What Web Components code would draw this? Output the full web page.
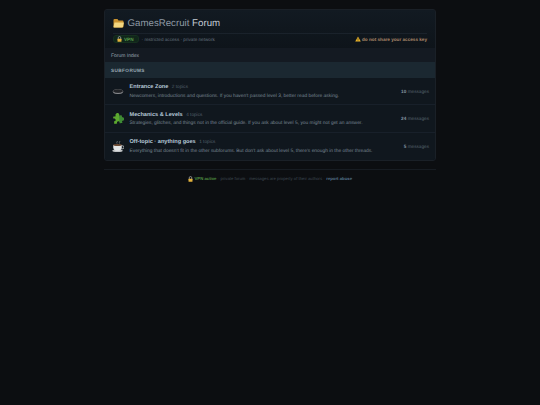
<!DOCTYPE html>
<html>
<head>
<meta charset="utf-8">
<title>GamesRecruit Forum</title>
<style>
  html, body { margin: 0; background: #0c0e11; }
  body { font-family: "Liberation Sans", Arial, sans-serif; color: #9aa7b2; text-rendering: geometricPrecision; }
  forum-page { width: 332px; margin: 9px auto 0; }
</style>
</head>
<body>
<forum-page>
  <forum-header></forum-header>
  <forum-crumb>Forum Index</forum-crumb>
  <forum-section>SUBFORUMS</forum-section>
  <forum-row name="Entrance Zone" topics="2 topics" count="10" icon="hole">Newcomers, introductions and questions. If you haven't passed level 3, better read before asking.</forum-row>
  <forum-row name="Mechanics &amp; Levels" topics="4 topics" count="24" icon="puzzle">Strategies, glitches, and things not in the official guide. If you ask about level 5, you might not get an answer.</forum-row>
  <forum-row name="Off-topic · anything goes" topics="1 topics" count="5" icon="coffee" last>Everything that doesn't fit in the other subforums. But don't ask about level 5, there's enough in the other threads.</forum-row>
  <forum-footer slot="footer"></forum-footer>
</forum-page>

<script>
const LOCK = `<svg width="5" height="6" viewBox="0 0 10 12"><path d="M2.500 6V3.600a2.500 2.500 0 0 1 5 0V6" fill="none" stroke="#aeb2b6" stroke-width="1.500"/><rect x="1" y="5.500" width="8" height="6" rx="1" fill="#e3b23c"/></svg>`;

const ICONS = {
  hole: `<svg width="12" height="12" viewBox="0 0 24 24"><ellipse cx="12" cy="13" rx="10.500" ry="5" fill="#6b6d70"/><ellipse cx="12" cy="12.300" rx="9.500" ry="3.700" fill="#212327"/><path d="M3 14.500c3 3 15 3 18 0" fill="none" stroke="#a4a6a9" stroke-width="1.200"/></svg>`,
  puzzle: `<svg width="12" height="12" viewBox="0 0 24 24"><path d="M2 9.500l5.500-1c-1.300-2.300-.5-6 3-6.500s4.800 3 3.800 5.500L19 7l.8 4.500c2.200-1.200 4.200.2 4 2.800s-2.400 3.500-4 2.500l.7 4.700-5 .9c.8-2.400-.3-4.200-2.800-3.900s-3.400 2.400-2.300 4.500l-5.600 1-1-5.500c2 .8 3.600-.5 3.400-2.600S5.200 12.300 3 13.500z" fill="#5ca82f"/><path d="M13.800 7.500 19 7l.8 4.500c2.200-1.200 4.200.2 4 2.800s-2.400 3.500-4 2.500l.7 4.700-5 .9z" fill="#3d8a35"/></svg>`,
  coffee: `<svg width="12" height="12" viewBox="0 0 24 24"><path d="M10 7c-2-2 2-3 0-5M15 7c-2-2 2-3 0-5" fill="none" stroke="#9a9da0" stroke-width="1.200"/><ellipse cx="11" cy="21.500" rx="10.500" ry="2.500" fill="#bfc2c4"/><path d="M2.500 10h17v4.500c0 4-3 7-6 7h-5c-3 0-6-3-6-7z" fill="#e4e6e7"/><ellipse cx="11" cy="10" rx="8.500" ry="2.200" fill="#6b4a33"/><path d="M19.500 11.500H21a2.500 2.500 0 0 1 0 6h-2.500" fill="none" stroke="#d6d8d9" stroke-width="1.500"/></svg>`
};

class ForumPage extends HTMLElement {
  constructor() {
    super();
    this.attachShadow({ mode: "open" });
    this.shadowRoot.innerHTML = `
      <style>
        :host { display: block; }
        #card {
          background: #10161d;
          border: 1px solid #1a2027;
          border-radius: 3px;
          overflow: hidden;
        }
        #foot { margin-top: 8px; }
      </style>
      <div id="card"><slot></slot></div>
      <div id="foot"><slot name="footer"></slot></div>
    `;
  }
}
customElements.define("forum-page", ForumPage);

class ForumHeader extends HTMLElement {
  constructor() {
    super();
    this.attachShadow({ mode: "open" });
    this.shadowRoot.innerHTML = `
      <style>
        :host { display: block; height: 38px; padding: 0 8px; background: linear-gradient(#121a22, #0e141a); }
        #title {
          display: flex; align-items: center; gap: 3.500px;
          height: 22px; padding-top: 0.500px;
          border-bottom: 1px solid #1a222b;
          font-size: 9.700px; color: #8f9aa5;
        }
        #title b { font-weight: 400; color: #c3ccd4; }
        #title svg { margin-top: 2px; }
        #name { padding-top: 3px; }
        #meta { display: flex; align-items: center; height: 11.500px; font-size: 4.650px; color: #66727d; }
        #vpn {
          display: flex; align-items: center; gap: 2px; height: 6px; padding: 0 4px 0 3px; margin-right: 3px;
          background: #10261a; border: 0.500px solid #16301f; border-radius: 3px;
          color: #5a9c49; font-weight: 700;
        }
        #warn { margin-left: auto; display: flex; align-items: center; gap: 1.500px; color: #a98769; font-weight: 700; }
        svg { display: block; }
      </style>
      <div id="title">
        <svg width="11" height="10" viewBox="0 0 22 20"><path d="M1 4a2 2 0 0 1 2-2h6l2 3h8a2 2 0 0 1 2 2v10a2 2 0 0 1-2 2H3a2 2 0 0 1-2-2z" fill="#c9922f"/><path d="M3 9h19l-2 8a2 2 0 0 1-2 2H2a1 1 0 0 1-1-1z" fill="#f4d77f"/></svg>
        <span id="name">GamesRecruit <b>Forum</b></span>
      </div>
      <div id="meta">
        <span id="vpn">${LOCK}VPN</span>
        <span>· restricted access · private network</span>
        <span id="warn"><svg width="6" height="6" viewBox="0 0 12 12"><path d="M6 1l5.500 10H.500z" fill="#e9b32a"/><rect x="5.400" y="4.500" width="1.200" height="3.500" fill="#3a2c08"/><rect x="5.400" y="8.800" width="1.200" height="1.200" fill="#3a2c08"/></svg>do not share your access key</span>
      </div>
    `;
  }
}
customElements.define("forum-header", ForumHeader);

class ForumCrumb extends HTMLElement {
  constructor() {
    super();
    this.attachShadow({ mode: "open" });
    this.shadowRoot.innerHTML = `
      <style>
        :host {
          display: flex; align-items: center; height: 14px; padding: 1px 6px 0; box-sizing: border-box;
          background: #141a22; font-size: 5px; color: #98a5b1;
        }
      </style>
      <slot></slot>
    `;
  }
}
customElements.define("forum-crumb", ForumCrumb);

class ForumSection extends HTMLElement {
  constructor() {
    super();
    this.attachShadow({ mode: "open" });
    this.shadowRoot.innerHTML = `
      <style>
        :host {
          display: flex; align-items: center; height: 16px; padding: 0 6px;
          background: #1b2831; font-size: 4.700px; font-weight: 700;
          letter-spacing: 0.400px; color: #9aa8b4;
        }
      </style>
      <slot></slot>
    `;
  }
}
customElements.define("forum-section", ForumSection);

class ForumRow extends HTMLElement {
  constructor() {
    super();
    this.attachShadow({ mode: "open" });
    const icon = ICONS[this.getAttribute("icon")];
    this.shadowRoot.innerHTML = `
      <style>
        :host { display: flex; align-items: center; height: 27.300px; padding: 0 6px 0 7px; box-sizing: border-box;
          border-bottom: 1px solid #18202a; background: #10171e; }
        :host([last]) { border-bottom: 0; }
        #icon { width: 12px; height: 12px; margin-right: 5.500px; }
        #icon svg { display: block; }
        #body { flex: 1; min-width: 0; padding-top: 1px; }
        #head { display: flex; align-items: baseline; gap: 3.500px; font-size: 5.600px; }
        #name { font-weight: 700; color: #b6c8d8; }
        #topics { font-size: 4.700px; color: #55626d; }
        #desc { margin-top: 3.800px; font-size: 4.860px; color: #7a8894; white-space: nowrap; }
        #count { font-size: 4.700px; color: #55626d; white-space: nowrap; }
        #count b { color: #8493a0; }
      </style>
      <div id="icon">${icon}</div>
      <div id="body">
        <div id="head"><span id="name">${this.getAttribute("name").replace(/&/g, "&amp;")}</span><span id="topics">${this.getAttribute("topics")}</span></div>
        <div id="desc"><slot></slot></div>
      </div>
      <div id="count"><b>${this.getAttribute("count")}</b> messages</div>
    `;
  }
}
customElements.define("forum-row", ForumRow);

class ForumFooter extends HTMLElement {
  constructor() {
    super();
    this.attachShadow({ mode: "open" });
    this.shadowRoot.innerHTML = `
      <style>
        :host { display: flex; justify-content: center; align-items: center; gap: 1.500px; height: 17.500px;
          border-top: 1px solid #171c22; font-size: 4.250px; color: #3f4952; }
        #ok { color: #4f8f42; font-weight: 700; }
        #abuse { color: #56748c; font-weight: 700; }
        svg { display: block; }
      </style>
      ${LOCK}<span id="ok">VPN active</span><span>· private forum · messages are property of their authors ·</span><span id="abuse">report abuse</span>
    `;
  }
}
customElements.define("forum-footer", ForumFooter);
</script>
</body>
</html>
